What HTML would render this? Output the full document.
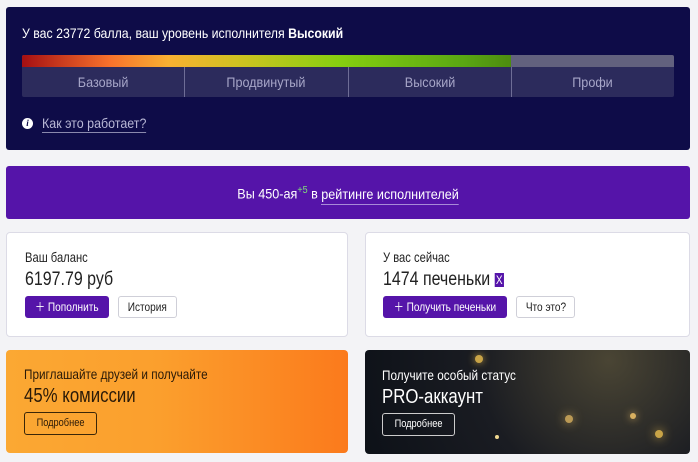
<!DOCTYPE html>
<html><head><meta charset="utf-8"><style>
*{box-sizing:border-box;margin:0;padding:0}
body{width:698px;height:462px;background:#f3f3f6;font-family:"Liberation Sans",sans-serif;position:relative;overflow:hidden;white-space:nowrap}
.a{position:absolute}
.n{display:inline-block;transform:scaleX(.84);transform-origin:left center}
.nc{display:inline-block;transform:scaleX(.84);transform-origin:center}
.top{left:6px;top:7px;width:684px;height:143px;background:#0e0c48;border-radius:3px;color:#fff}
.bar{left:16px;top:48px;width:652px;height:12px;background:#62617e;border-radius:2px 2px 0 0;overflow:hidden}
.bar div{width:489px;height:12px;background:linear-gradient(90deg,#a50f12,#f7722c 18%,#f9b132 30%,#cdc320 45%,#86cf10 65%,#5aa812 90%,#4d8c10)}
.lv{left:16px;top:60px;width:652px;height:30px;background:#2c2b5c;display:flex;border-radius:0 0 2px 2px}
.lv div{flex:1;text-align:center;line-height:30px;font-size:14px;color:#a7a6c8;border-left:1px solid #6e6d96}
.lv div:first-child{border-left:none}
.lv .nc{transform:scaleX(.9)}
.pur{left:6px;top:166px;width:684px;height:53px;background:#5514a9;border-radius:3px;color:#fff;display:flex;align-items:center;justify-content:center;font-size:14px}
.card{background:#fff;border:1px solid #dcdbe6;border-radius:4px}
.btn{position:absolute;height:22px;border-radius:3px;font-size:12px;line-height:22px;text-align:center;overflow:hidden}
.bp{background:#5514a9;color:#fff}
.bw{background:#fff;border:1px solid #cfcfd8;color:#222;line-height:20px}
</style></head><body>
<div class="a top">
 <div class="a" style="left:16px;top:18px;font-size:14px"><span class="n" style="transform:scaleX(.88)">У вас 23772 балла, ваш уровень исполнителя <b>Высокий</b></span></div>
 <div class="a bar"><div></div></div>
 <div class="a lv"><div><span class="nc">Базовый</span></div><div><span class="nc">Продвинутый</span></div><div><span class="nc">Высокий</span></div><div><span class="nc">Профи</span></div></div>
 <div class="a" style="left:16px;top:111px;width:11px;height:11px;border-radius:50%;background:#fff;color:#0e0c48;font-size:9px;font-weight:bold;text-align:center;line-height:11px;font-family:'Liberation Serif',serif;font-style:italic">i</div>
 <div class="a" style="left:36px;top:108px;font-size:14px;color:#b9b8d6;line-height:17px"><span class="n" style="transform:scaleX(.89);border-bottom:1px solid #8a89ad">Как это работает?</span></div>
</div>
<div class="a pur"><span class="nc" style="margin-top:2px;transform:scaleX(.9)">Вы 450-ая<sup style="color:#7fe07a;font-size:10px">+5</sup> в <span style="border-bottom:1px solid #a88ad8;padding-bottom:2px">рейтинге исполнителей</span></span></div>

<div class="a card" style="left:6px;top:232px;width:342px;height:105px">
 <div class="a" style="left:18px;top:16px;font-size:14px;color:#222"><span class="n" style="transform:scaleX(.8)">Ваш баланс</span></div>
 <div class="a" style="left:18px;top:36px;font-size:19px;color:#222"><span class="n">6197.79 руб</span></div>
 <div class="btn bp" style="left:18px;top:63px;width:84px"><span class="nc">＋ Пополнить</span></div>
 <div class="btn bw" style="left:111px;top:63px;width:59px"><span class="nc">История</span></div>
</div>
<div class="a card" style="left:365px;top:232px;width:325px;height:105px">
 <div class="a" style="left:17px;top:16px;font-size:14px;color:#222"><span class="n" style="transform:scaleX(.8)">У вас сейчас</span></div>
 <div class="a" style="left:17px;top:36px;font-size:19px;color:#222"><span class="n">1474 печеньки <span style="display:inline-block;width:11px;height:14px;background:#5514a9;color:#fff;font-size:12px;line-height:14px;text-align:center;vertical-align:1px">X</span></span></div>
 <div class="btn bp" style="left:17px;top:63px;width:124px"><span class="nc">＋ Получить печеньки</span></div>
 <div class="btn bw" style="left:150px;top:63px;width:59px"><span class="nc">Что это?</span></div>
</div>
<div class="a" style="left:6px;top:350px;width:342px;height:103px;border-radius:4px;background:linear-gradient(90deg,#fba833,#fb9f2d 45%,#fb7a1c)">
 <div class="a" style="left:18px;top:16px;font-size:14px;color:#2a1a08"><span class="n">Приглашайте друзей и получайте</span></div>
 <div class="a" style="left:18px;top:35px;font-size:20px;color:#2a1a08"><span class="n">45% комиссии</span></div>
 <div class="a" style="left:18px;top:62px;width:73px;height:23px;border:1px solid #3a2608;border-radius:3px;font-size:11px;line-height:21px;text-align:center;color:#2a1a08"><span class="nc">Подробнее</span></div>
</div>
<div class="a" style="left:365px;top:350px;width:325px;height:104px;border-radius:4px;background:radial-gradient(circle at 75% 10%,#4a4534,#1a1c22 50%,#0d1118);overflow:hidden">
 <div class="a" style="left:110px;top:5px;width:8px;height:8px;border-radius:50%;background:#c9a447;box-shadow:0 0 8px #c9a447"></div>
 <div class="a" style="left:265px;top:63px;width:6px;height:6px;border-radius:50%;background:#d8b060;box-shadow:0 0 8px #d8b060"></div>
 <div class="a" style="left:200px;top:65px;width:8px;height:8px;border-radius:50%;background:#bb9a55;box-shadow:0 0 10px #bb9a55"></div>
 <div class="a" style="left:130px;top:85px;width:4px;height:4px;border-radius:50%;background:#f0d890"></div>
 <div class="a" style="left:290px;top:80px;width:8px;height:8px;border-radius:50%;background:#c9a447;box-shadow:0 0 10px #c9a447"></div>
 <div class="a" style="left:17px;top:17px;font-size:14px;color:#fff"><span class="n">Получите особый статус</span></div>
 <div class="a" style="left:17px;top:36px;font-size:20px;color:#fff"><span class="n">PRO-аккаунт</span></div>
 <div class="a" style="left:17px;top:63px;width:73px;height:23px;border:1px solid #ccc;border-radius:3px;font-size:11px;line-height:21px;text-align:center;color:#fff"><span class="nc">Подробнее</span></div>
</div>
</body></html>
